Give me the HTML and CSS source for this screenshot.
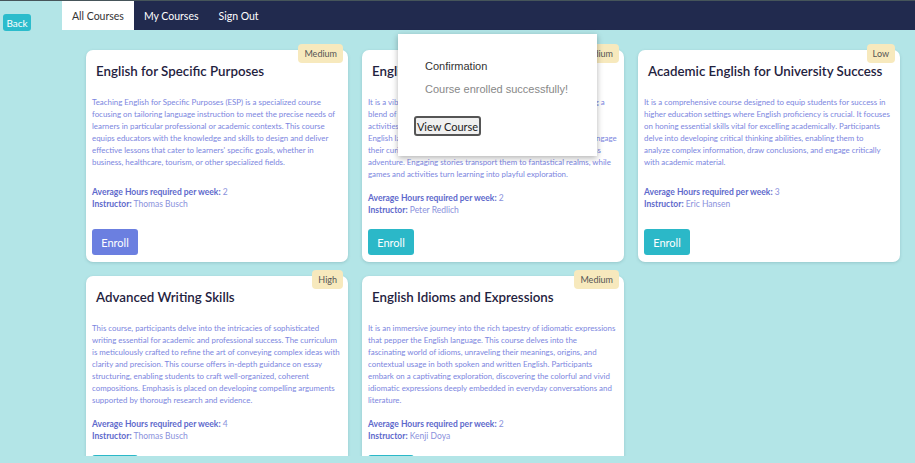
FILE: index.html
```html
<!DOCTYPE html>
<html lang="en">
<head>
<meta charset="utf-8">
<title>All Courses</title>
<link rel="stylesheet" href="styles.css">
</head>
<body>
<header class="topbar">
  <button class="back-btn">Back</button>
  <nav class="tabs">
    <a class="tab tab-active">All Courses</a>
    <a class="tab">My Courses</a>
    <a class="tab">Sign Out</a>
  </nav>
</header>
<main class="content">
  <section class="grid">
    <article class="card">
      <span class="badge">Medium</span>
      <h2 class="card-title">English for Specific Purposes</h2>
      <p class="card-desc">Teaching English for Specific Purposes (ESP) is a specialized course<br>focusing on tailoring language instruction to meet the precise needs of<br>learners in particular professional or academic contexts. This course<br>equips educators with the knowledge and skills to design and deliver<br>effective lessons that cater to learners' specific goals, whether in<br>business, healthcare, tourism, or other specialized fields.</p>
      <div class="card-meta">
        <div><b>Average Hours required per week:</b> 2</div>
        <div><b>Instructor:</b> Thomas Busch</div>
      </div>
      <button class="enroll enroll-alt">Enroll</button>
    </article>
    <article class="card">
      <span class="badge">Medium</span>
      <h2 class="card-title">English for Young Learners</h2>
      <p class="card-desc">It is a vibrant and playful course designed for young minds, offering a<br>blend of storytelling, songs, interactive games, and other engaging<br>activities, thoughtfully designed to nurture a love of learning.<br>English language skills grow as colorful characters and narratives engage<br>their curiosity and imagination, making each lesson a tale of endless<br>adventure. Engaging stories transport them to fantastical realms, while<br>games and activities turn learning into playful exploration.</p>
      <div class="card-meta">
        <div><b>Average Hours required per week:</b> 2</div>
        <div><b>Instructor:</b> Peter Redlich</div>
      </div>
      <button class="enroll">Enroll</button>
    </article>
    <article class="card">
      <span class="badge">Low</span>
      <h2 class="card-title">Academic English for University Success</h2>
      <p class="card-desc">It is a comprehensive course designed to equip students for success in<br>higher education settings where English proficiency is crucial. It focuses<br>on honing essential skills vital for excelling academically. Participants<br>delve into developing critical thinking abilities, enabling them to<br>analyze complex information, draw conclusions, and engage critically<br>with academic material.</p>
      <div class="card-meta">
        <div><b>Average Hours required per week:</b> 3</div>
        <div><b>Instructor:</b> Eric Hansen</div>
      </div>
      <button class="enroll">Enroll</button>
    </article>
    <article class="card">
      <span class="badge">High</span>
      <h2 class="card-title">Advanced Writing Skills</h2>
      <p class="card-desc">This course, participants delve into the intricacies of sophisticated<br>writing essential for academic and professional success. The curriculum<br>is meticulously crafted to refine the art of conveying complex ideas with<br>clarity and precision. This course offers in-depth guidance on essay<br>structuring, enabling students to craft well-organized, coherent<br>compositions. Emphasis is placed on developing compelling arguments<br>supported by thorough research and evidence.</p>
      <div class="card-meta">
        <div><b>Average Hours required per week:</b> 4</div>
        <div><b>Instructor:</b> Thomas Busch</div>
      </div>
      <button class="enroll">Enroll</button>
    </article>
    <article class="card">
      <span class="badge">Medium</span>
      <h2 class="card-title">English Idioms and Expressions</h2>
      <p class="card-desc">It is an immersive journey into the rich tapestry of idiomatic expressions<br>that pepper the English language. This course delves into the<br>fascinating world of idioms, unraveling their meanings, origins, and<br>contextual usage in both spoken and written English. Participants<br>embark on a captivating exploration, discovering the colorful and vivid<br>idiomatic expressions deeply embedded in everyday conversations and<br>literature.</p>
      <div class="card-meta">
        <div><b>Average Hours required per week:</b> 2</div>
        <div><b>Instructor:</b> Kenji Doya</div>
      </div>
      <button class="enroll">Enroll</button>
    </article>
  </section>
</main>
<div class="dialog" role="dialog">
  <div class="dialog-title">Confirmation</div>
  <div class="dialog-text">Course enrolled successfully!</div>
  <button class="dialog-btn">View Course</button>
</div>
</body>
</html>
```
FILE: styles.css
```css
* { box-sizing: border-box; }
html, body { margin: 0; padding: 0; }
body {
  background: #b3e5e7;
  font-family: Lato, "Open Sans", sans-serif;
  width: 915px;
  height: 463px;
  overflow: hidden;
  position: relative;
  border-top: 1px solid #46555a;
}
.topbar {
  display: flex;
  align-items: flex-start;
  height: 29px;
}
.back-btn {
  margin: 13px 0 0 3px;
  width: 28px;
  height: 17px;
  padding: 0;
  border: none;
  border-radius: 3px;
  background: #2bbccc;
  color: #fff;
  font-family: inherit;
  font-size: 10px;
}
.tabs {
  margin-left: 31px;
  flex: 1;
  display: flex;
  height: 29px;
  background: #212a4e;
}
.tab {
  padding: 0 10px;
  display: flex;
  align-items: center;
  color: #fff;
  font-size: 10.5px;
}
.tab-active {
  background: #fff;
  color: #333;
}
.content {
  height: 426px;
  overflow: hidden;
  padding: 20px 15px 0 86px;
}
.grid {
  display: grid;
  grid-template-columns: repeat(3, 262px);
  gap: 14px;
}
.card {
  position: relative;
  background: #fff;
  border-radius: 7px;
  box-shadow: 0 1px 3px rgba(60, 110, 120, 0.25);
  padding: 0 6px 7px;
  display: flex;
  flex-direction: column;
  align-items: flex-start;
}
.badge {
  position: absolute;
  top: -6px;
  right: 5px;
  height: 19px;
  padding: 0 6px;
  display: flex;
  align-items: center;
  background: #f7e9bd;
  border-radius: 4px;
  color: #555;
  font-size: 9px;
}
.card-title {
  margin: 11px 4px 0;
  font-size: 13.3px;
  line-height: 20px;
  font-weight: 600;
  color: #1f2240;
}
.card-desc {
  margin: 15px -4px 0 0;
  min-height: 78px;
  font-size: 7.9px;
  line-height: 12px;
  white-space: nowrap;
  color: #7c86e0;
}
.card-meta {
  margin: 12px 0 13px;
  font-size: 8.5px;
  line-height: 12px;
  color: #8a91dc;
}
.card-meta b { color: #5e69cc; font-weight: 700; }
.enroll {
  margin-top: auto;
  width: 46px;
  height: 26px;
  border: none;
  border-radius: 3px;
  background: #2bb8c8;
  color: #fff;
  font-family: inherit;
  font-size: 11px;
}
.enroll-alt { background: #6b7fe0; }
.dialog {
  position: absolute;
  left: 398px;
  top: 33px;
  width: 199px;
  height: 122px;
  background: #fff;
  box-shadow: 0 2px 6px rgba(0, 0, 0, 0.3);
  padding: 26px 16px 0;
  font-family: "Liberation Sans", Arial, sans-serif;
}
.dialog-title {
  margin-left: 11px;
  font-size: 11px;
  color: #333;
}
.dialog-text {
  margin: 11px 0 0 11px;
  font-size: 11px;
  color: #888;
}
.dialog-btn {
  margin-top: 21px;
  width: 67px;
  height: 20px;
  padding: 0;
  border: 2px solid #555;
  border-radius: 3px;
  background: #f0f0f0;
  color: #222;
  font-family: Lato, sans-serif;
  font-size: 11px;
}
```
